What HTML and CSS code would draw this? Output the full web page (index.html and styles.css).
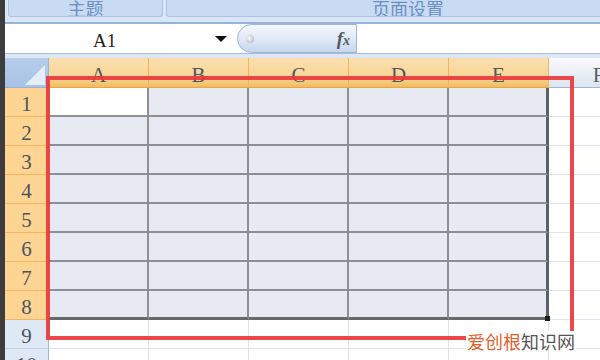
FILE: index.html
```html
<!DOCTYPE html>
<html lang="zh">

<head>
    <meta charset="UTF-8">
    <meta name="viewport" content="width=device-width, initial-scale=1.0">
    <title>工作表选区</title>
    <link rel="stylesheet" href="styles.css">
</head>

<body>
    <div class="edge"></div>
    <div class="app">
        <!-- 功能区分组标题 -->
        <div class="ribbon">
            <div class="group g-theme">主题</div>
            <div class="group g-page">页面设置</div>
        </div>

        <!-- 名称框 + 编辑栏 -->
        <div class="fbar">
            <div class="namebox">
                <span class="ref">A1</span>
                <span class="drop"></span>
            </div>
            <div class="fxpill">
                <span class="dot"></span>
                <span class="fx">f<i>x</i></span>
            </div>
            <div class="finput"></div>
        </div>
        <div class="fstrip"></div>

        <!-- 表格 -->
        <div class="sheet">
            <div class="corner">
                <svg width="44" height="30" viewBox="0 0 44 30"><polygon points="40,7 40,27 20,27" fill="#e6eef9" /></svg>
            </div>
            <div class="ch sel">A</div>
            <div class="ch sel">B</div>
            <div class="ch sel">C</div>
            <div class="ch sel">D</div>
            <div class="ch sel">E</div>
            <div class="ch">F</div>

            <div class="rh sel">1</div>
            <div class="c sel active"></div><div class="c sel"></div><div class="c sel"></div><div class="c sel"></div><div class="c sel lastcol"></div><div class="c"></div>

            <div class="rh sel">2</div>
            <div class="c sel"></div><div class="c sel"></div><div class="c sel"></div><div class="c sel"></div><div class="c sel lastcol"></div><div class="c"></div>

            <div class="rh sel">3</div>
            <div class="c sel"></div><div class="c sel"></div><div class="c sel"></div><div class="c sel"></div><div class="c sel lastcol"></div><div class="c"></div>

            <div class="rh sel">4</div>
            <div class="c sel"></div><div class="c sel"></div><div class="c sel"></div><div class="c sel"></div><div class="c sel lastcol"></div><div class="c"></div>

            <div class="rh sel">5</div>
            <div class="c sel"></div><div class="c sel"></div><div class="c sel"></div><div class="c sel"></div><div class="c sel lastcol"></div><div class="c"></div>

            <div class="rh sel">6</div>
            <div class="c sel"></div><div class="c sel"></div><div class="c sel"></div><div class="c sel"></div><div class="c sel lastcol"></div><div class="c"></div>

            <div class="rh sel">7</div>
            <div class="c sel"></div><div class="c sel"></div><div class="c sel"></div><div class="c sel"></div><div class="c sel lastcol"></div><div class="c"></div>

            <div class="rh sel">8</div>
            <div class="c sel lastrow"></div><div class="c sel lastrow"></div><div class="c sel lastrow"></div><div class="c sel lastrow"></div><div class="c sel lastrow lastcol handle"></div><div class="c"></div>

            <div class="rh">9</div>
            <div class="c"></div><div class="c"></div><div class="c"></div><div class="c"></div><div class="c"></div><div class="c"></div>

            <div class="rh">10</div>
            <div class="c"></div><div class="c"></div><div class="c"></div><div class="c"></div><div class="c"></div><div class="c"></div>
        </div>
    </div>

    <!-- 红色标注框和水印 -->
    <div class="mark"></div>
    <div class="wm"><span class="wm-a">爱创根</span><span class="wm-b">知识网</span></div>
</body>

</html>
```

FILE: styles.css
```css
body {
    margin: 0;
    width: 600px;
    height: 360px;
    overflow: hidden;
    position: relative;
    display: flex;
    background-color: #ffffff;
    font-family: "Noto Sans CJK SC", "Noto Sans", sans-serif;
}

.edge {
    width: 5px;
    flex: none;
    background-color: #3d3d3d;
}

.app {
    flex: 1;
    min-width: 0;
    overflow: hidden;
}

/* 功能区 */
.ribbon {
    height: 22px;
    display: flex;
    gap: 3px;
    padding-left: 3px;
    background-color: #dbe7f6;
    border-bottom: 2px solid #98b3d9;
    overflow: hidden;
}

.group {
    flex: none;
    height: 17px;
    box-sizing: border-box;
    border: 1px solid #abc4e4;
    border-top: 0;
    border-radius: 0 0 3px 3px;
    background-color: #c8dbf2;
    color: #6a8fc6;
    font-size: 18px;
    line-height: 16px;
    text-align: center;
    overflow: hidden;
}

.g-theme {
    width: 155px;
}

.g-page {
    width: 484px;
}

/* 编辑栏 */
.fbar {
    height: 29px;
    display: flex;
    background-color: #ffffff;
    border-bottom: 1px solid #a9bdd9;
}

.namebox {
    width: 232px;
    flex: none;
    display: flex;
    align-items: center;
    padding-left: 88px;
    box-sizing: border-box;
}

.ref {
    font-family: "Liberation Serif", serif;
    font-size: 19px;
    color: #1e1e1e;
    padding-top: 5px;
}

.drop {
    margin-left: auto;
    margin-right: 10px;
    width: 0;
    height: 0;
    border-left: 6px solid transparent;
    border-right: 6px solid transparent;
    border-top: 6px solid #111111;
}

.fxpill {
    width: 120px;
    flex: none;
    box-sizing: border-box;
    display: flex;
    align-items: center;
    padding-left: 8px;
    border: 1px solid #9fb6d5;
    border-radius: 15px 0 0 15px;
    background: linear-gradient(#f4f7fc, #dfe8f5 55%, #c6d6ee);
}

.dot {
    width: 8px;
    height: 8px;
    border-radius: 50%;
    background: radial-gradient(circle at 40% 40%, #ffffff, #9ea4ad);
}

.fx {
    margin-left: auto;
    margin-right: 6px;
    font-family: "Liberation Serif", serif;
    font-style: italic;
    font-weight: bold;
    font-size: 19px;
    color: #555a61;
}

.fx i {
    font-size: 14px;
}

.finput {
    flex: 1;
}

.fstrip {
    height: 4px;
    background-color: #dde7f4;
}

/* 表格 */
.sheet {
    display: grid;
    grid-template-columns: 44px repeat(6, 100px);
    grid-template-rows: 30px repeat(10, 29px);
    font-family: "Liberation Serif", serif;
}

.sheet > div {
    box-sizing: border-box;
}

.corner {
    background: linear-gradient(#b6cdeb, #a8c3e6);
    border-right: 1px solid #9bb4d6;
    border-bottom: 1px solid #9bb4d6;
}

.corner svg {
    display: block;
}

.ch {
    text-align: center;
    font-size: 21px;
    line-height: 30px;
    padding-top: 2px;
    color: #57606a;
    background: linear-gradient(#f8fafd, #dce5f1);
    border-right: 1px solid #c9d6e7;
    border-bottom: 1px solid #9fb6d4;
}

.ch.sel {
    color: #4e5660;
    background: linear-gradient(#fadfae, #f8d495 70%, #f1bb5c);
    border-right-color: #f0b35e;
    border-bottom-color: #e6a548;
}

.rh {
    text-align: center;
    font-size: 21px;
    line-height: 29px;
    padding-top: 2px;
    color: #4b5560;
    background-color: #dfe8f5;
    border-right: 1px solid #9fb6d4;
    border-bottom: 1px solid #c3d2e6;
}

.rh.sel {
    background-color: #fdd492;
    border-right-color: #f0ae58;
    border-bottom-color: #f3b466;
}

.c {
    background-color: #ffffff;
    border-right: 1px solid #dde2eb;
    border-bottom: 1px solid #dde2eb;
}

.c.sel {
    background-color: #e8eaf3;
    border-right: 2px solid #8d8f95;
    border-bottom: 2px solid #8d8f95;
}

.c.active {
    background-color: #ffffff;
}

.c.lastcol {
    border-right: 3px solid #5e6063;
}

.c.lastrow {
    border-bottom: 3px solid #66686b;
}

.handle {
    position: relative;
}

.handle::after {
    content: "";
    position: absolute;
    right: -4px;
    bottom: -4px;
    width: 5px;
    height: 5px;
    background-color: #1d1d1d;
}

/* 标注 */
.mark {
    position: absolute;
    left: 46px;
    top: 76px;
    width: 528px;
    height: 264px;
    box-sizing: border-box;
    border: 4px solid rgba(234, 56, 60, 0.92);
}

.wm {
    position: absolute;
    left: 466px;
    top: 331px;
    padding: 0 1px;
    background-color: #ffffff;
    font-size: 18px;
    line-height: 20px;
}

.wm-a {
    color: #e0602c;
}

.wm-b {
    color: #555555;
}
```
